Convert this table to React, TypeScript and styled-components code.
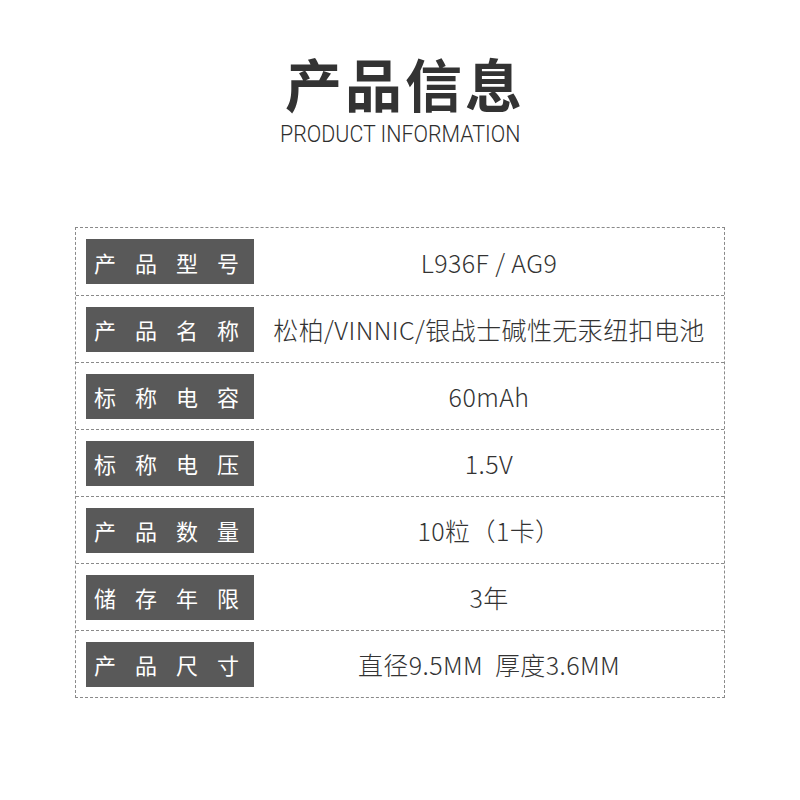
import * as React from 'react'
import styled, { createGlobalStyle } from 'styled-components'

const GlobalStyle = createGlobalStyle`
  html, body {
    margin: 0;
    padding: 0;
    background: #fff;
  }
  body {
    font-family: 'Noto Sans CJK SC', 'Noto Sans', sans-serif;
    color: #333;
  }
`

const Page = styled.div`
  width: 800px;
  height: 800px;
  display: flex;
  flex-direction: column;
  align-items: center;
  padding-top: 53px;
  box-sizing: border-box;
`

const Title = styled.h1`
  margin: 0 0 0 10px;
  font-size: 57px;
  line-height: 58px;
  font-weight: 700;
  letter-spacing: 3px;
  color: #333;
`

const Subtitle = styled.div`
  margin-top: 11px;
  font-family: 'Roboto', 'Liberation Sans', sans-serif;
  font-size: 23px;
  line-height: 26px;
  font-weight: 300;
  color: #2e2e2e;
  transform: scaleX(0.93);
`

const Table = styled.div`
  margin-top: 79px;
  width: 650px;
  border: 1px dashed #8a8a8a;
  box-sizing: border-box;
  display: flex;
  flex-direction: column;
`

const Row = styled.div`
  display: flex;
  align-items: center;
  height: 67px;
  padding: 0 0 0 10px;
  box-sizing: border-box;
  & + & {
    border-top: 1px dashed #8a8a8a;
  }
`

const Label = styled.div`
  flex: none;
  width: 168px;
  height: 45px;
  background: #595959;
  color: #fff;
  font-size: 22px;
  letter-spacing: 19px;
  padding-left: 8px;
  box-sizing: border-box;
  display: flex;
  align-items: center;
  white-space: nowrap;
`

const Value = styled.div`
  flex: 1;
  text-align: center;
  font-size: 25px;
  font-weight: 300;
  letter-spacing: 0.4px;
  color: #333;
  white-space: pre;
`

const rows: [string, string][] = [
  ['产品型号', 'L936F / AG9'],
  ['产品名称', '松柏/VINNIC/银战士碱性无汞纽扣电池'],
  ['标称电容', '60mAh'],
  ['标称电压', '1.5V'],
  ['产品数量', '10粒（1卡）'],
  ['储存年限', '3年'],
  ['产品尺寸', '直径9.5MM  厚度3.6MM'],
]

export default function App() {
  return (
    <>
      <GlobalStyle />
      <Page>
        <Title>产品信息</Title>
        <Subtitle>PRODUCT INFORMATION</Subtitle>
        <Table>
          {rows.map(([label, value]) => (
            <Row key={label}>
              <Label>{label}</Label>
              <Value>{value}</Value>
            </Row>
          ))}
        </Table>
      </Page>
    </>
  )
}
